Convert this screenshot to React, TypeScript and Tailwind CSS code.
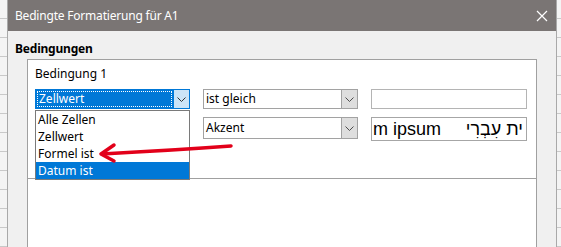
import React from "react";

const ROWS = Array.from({ length: 13 });

function Chevron({ color = "#4d4d4d" }: { color?: string }) {
  return (
    <svg width="9" height="5" viewBox="0 0 9 5" fill="none" stroke={color} strokeWidth="1">
      <path d="M0.5 0.5l4 4 4-4" />
    </svg>
  );
}

function GridStrip({ width }: { width: string }) {
  return (
    <div className={`${width} flex shrink-0 flex-col bg-[#f4f4f4]`}>
      {ROWS.map((_, i) => (
        <div key={i} className="h-[19px] shrink-0 border-b border-[#c9c9c9]" />
      ))}
    </div>
  );
}

function Combo({ label, h = "h-[20px]" }: { label: string; h?: string }) {
  return (
    <div className={`flex ${h} w-[155px] border border-[#a2a2a2] bg-white`}>
      <div className="flex flex-1 items-center pl-[2px] leading-none">{label}</div>
      <div className="flex w-[16px] items-center justify-center border-l border-[#a2a2a2] bg-[#dedede]">
        <Chevron />
      </div>
    </div>
  );
}

const LIST_ITEMS = ["Alle Zellen", "Zellwert", "Formel ist", "Datum ist"];

export default function App() {
  return (
    <div className="relative flex h-[247px] w-[561px] overflow-hidden bg-[#f0f0f0] font-['Noto_Sans',sans-serif] text-[12px] text-black">
      <GridStrip width="w-[7px]" />

      <div className="flex w-[550px] shrink-0 flex-col border-x border-[#a9a9a9]">
        {/* title bar */}
        <div className="flex h-[31px] shrink-0 items-center justify-between bg-[#7a7574] pl-[7px] pr-[8px] text-white">
          <span className="tracking-[-0.2px]">Bedingte Formatierung für A1</span>
          <svg width="12" height="12" viewBox="0 0 12 12" stroke="#fff" strokeWidth="1.2">
            <path d="M1 1l10 10M11 1L1 11" />
          </svg>
        </div>

        <div className="flex flex-1 flex-col bg-[#f0f0f0] pl-[7px] pt-[10px]">
          <div className="font-bold leading-[16px] tracking-[-0.2px]">Bedingungen</div>

          <div className="ml-[12px] mt-[2px] h-[200px] w-[510px] border border-[#a0a0a0] bg-white">
            {/* condition 1 */}
            <div className="relative h-[119px] border-b border-[#a0a0a0] pl-[7px] pt-[6px]">
              <div className="leading-[16px]">Bedingung 1</div>

              <div className="mt-[7px] flex gap-[13px]">
                <div className="flex h-[20px] w-[155px] border border-[#0078d7] bg-[#0078d7]">
                  <div className="m-[1px] flex flex-1 items-center border border-dotted border-[#ffffff] pl-[1px] leading-none text-white">
                    Zellwert
                  </div>
                  <div className="flex w-[16px] items-center justify-center border-l border-[#0078d7] bg-[#cce4f7]">
                    <Chevron color="#333" />
                  </div>
                </div>
                <Combo label="ist gleich" />
                <div className="h-[20px] w-[156px] border border-[#b4b4b4] bg-white" />
              </div>

              <div className="mt-[8px] flex gap-[13px]">
                <div className="w-[155px]" />
                <Combo label="Akzent" h="h-[22px]" />
                <div className="flex h-[24px] w-[156px] items-center justify-between overflow-hidden border border-[#a6a6a6] bg-white pl-[1px] pr-[3px] font-['Liberation_Sans',sans-serif] text-[18px] leading-none">
                  <span className="whitespace-nowrap">m ipsum</span>
                  <span dir="rtl" className="whitespace-nowrap">
                    {"ית עִבְרִי"}
                  </span>
                </div>
              </div>

              {/* open dropdown list */}
              <div className="absolute left-[7px] top-[50px] w-[155px] border border-[#7a7a7a] bg-white">
                {LIST_ITEMS.map((item, i) => (
                  <div
                    key={item}
                    className={`flex h-[17px] items-center pl-[2px] leading-none ${
                      i === 3 ? "bg-[#0078d7] text-white" : ""
                    }`}
                  >
                    {item}
                  </div>
                ))}
              </div>
            </div>
          </div>
        </div>
      </div>

      <GridStrip width="w-[4px]" />

      {/* red annotation arrow */}
      <svg
        className="pointer-events-none absolute left-0 top-0"
        width="561"
        height="247"
        viewBox="0 0 561 247"
        fill="none"
        stroke="#e2001a"
        strokeLinecap="round"
        strokeLinejoin="round"
      >
        <path d="M231 146 C190 149 140 152 102 154" strokeWidth="3.5" />
        <path d="M114 145 L101 154 L114 161" strokeWidth="3.5" />
      </svg>
    </div>
  );
}
